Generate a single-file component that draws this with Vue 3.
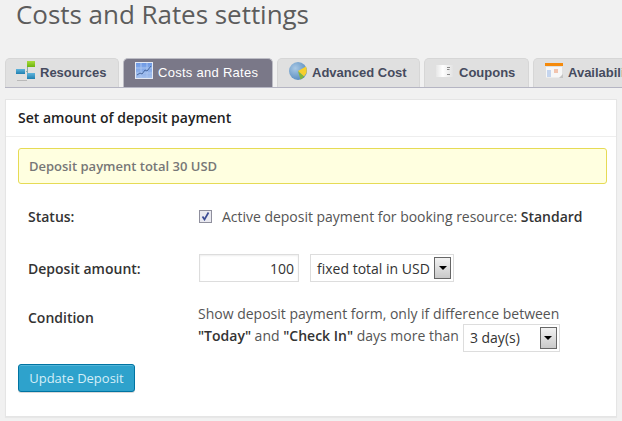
<script setup>
const tabs = [
  { name: 'Resources', icon: 'res', w: 114 },
  { name: 'Costs and Rates', icon: 'cost', w: 150, active: true },
  { name: 'Advanced Cost', icon: 'adv', w: 143 },
  { name: 'Coupons', icon: 'cou', w: 105 },
  { name: 'Availability', icon: 'ava', w: 120 },
]
</script>

<template>
  <div class="page">
    <h1 class="title">Costs and Rates settings</h1>
    <div class="tabs">
      <div v-for="t in tabs" :key="t.name" class="tab" :class="{ active: t.active }" :style="{ width: t.w + 'px' }">
        <svg class="ico" width="18" height="18" viewBox="0 0 18 18">
          <defs>
            <linearGradient id="gBlue" x1="0" y1="0" x2="0" y2="1">
              <stop offset="0" stop-color="#5fb4dc" />
              <stop offset="1" stop-color="#1f7fb0" />
            </linearGradient>
            <linearGradient id="gGreen" x1="0" y1="0" x2="0" y2="1">
              <stop offset="0" stop-color="#a8dc3c" />
              <stop offset="1" stop-color="#6cb30f" />
            </linearGradient>
            <linearGradient id="gCost" x1="0" y1="0" x2="0" y2="1">
              <stop offset="0" stop-color="#6c98e4" />
              <stop offset="1" stop-color="#a5c1ee" />
            </linearGradient>
            <radialGradient id="gAdv" cx="0.35" cy="0.35" r="0.75">
              <stop offset="0" stop-color="#a9c8e4" />
              <stop offset="1" stop-color="#5288bd" />
            </radialGradient>
            <linearGradient id="gCou" x1="0" y1="0" x2="1" y2="0">
              <stop offset="0" stop-color="#e6e6e6" />
              <stop offset="0.4" stop-color="#ffffff" />
              <stop offset="1" stop-color="#e2e2e2" />
            </linearGradient>
          </defs>
          <template v-if="t.icon === 'res'">
            <path d="M9 9.5h2M10.5 5v8" stroke="#8aa" fill="none" />
            <rect x="10" y="-1" width="8" height="6" fill="url(#gGreen)" />
            <rect x="-1" y="7" width="9" height="5" fill="url(#gBlue)" />
            <rect x="10" y="11" width="8" height="6" fill="url(#gBlue)" />
            <rect x="0" y="18" width="10" height="1" fill="#b9b9b9" />
          </template>
          <template v-else-if="t.icon === 'cost'">
            <rect x="0.5" y="0.5" width="17" height="16" fill="url(#gCost)" stroke="#e3e9f4" />
            <path d="M6 1v15M12 1v15M1 6h16M1 11h16" stroke="#a9c4f0" fill="none" />
            <path d="M2 13l3-2 2 1 3-4 2 1 4-5" stroke="#47679e" fill="none" />
          </template>
          <template v-else-if="t.icon === 'adv'">
            <circle cx="9" cy="9" r="9" fill="url(#gAdv)" />
            <path d="M9 9l8-4.5a9 9 0 0 1-2 10z" fill="#f7cf2d" />
            <path d="M9 9l6 5.5a9 9 0 0 1-3.5 3z" fill="#83b83a" />
          </template>
          <template v-else-if="t.icon === 'cou'">
            <rect x="0" y="3" width="17" height="12" fill="url(#gCou)" />
            <path d="M11 5.5h3M11 7.5h2.5M11 12.5h3" stroke="#888" fill="none" />
          </template>
          <template v-else>
            <rect x="0" y="1" width="18" height="3" fill="#f58a0b" />
            <rect x="0.5" y="4.5" width="17" height="11.5" fill="#f7f7f7" stroke="#e0e0e0" />
            <rect x="2" y="8" width="4" height="7" fill="#c5d5ee" />
            <rect x="9" y="7" width="4" height="4" fill="#f2c4ae" />
            <path d="M14 16l4-4v4z" fill="#c4c4c4" />
          </template>
        </svg>
        <span>{{ t.name }}</span>
      </div>
    </div>

    <section class="panel">
      <h2 class="panel-head">Set amount of deposit payment</h2>
      <div class="panel-body">
        <div class="notice">Deposit payment total 30 USD</div>

        <div class="row status">
          <div class="label">Status:</div>
          <label class="check-line">
            <span class="check">
              <svg width="9" height="9" viewBox="0 0 9 9"><path d="M1.5 4.5l2 3 4-7" stroke="#3a4a94" stroke-width="1.7" fill="none" /></svg>
            </span>
            <span>Active deposit payment for booking resource: <b>Standard</b></span>
          </label>
        </div>

        <div class="row amount">
          <div class="label">Deposit amount:</div>
          <input class="num" value="100" />
          <div class="select type-select">
            <span>fixed total in USD</span>
            <i class="arrow"></i>
          </div>
        </div>

        <div class="row condition">
          <div class="label">Condition</div>
          <div class="cond-text">
            <div>Show deposit payment form, only if difference between</div>
            <div class="line2">
              <span><b>"Today"</b> and <b>"Check In"</b> days more than</span>
              <div class="select days-select">
                <span>3 day(s)</span>
                <i class="arrow"></i>
              </div>
            </div>
          </div>
        </div>

        <button class="btn">Update Deposit</button>
      </div>
    </section>
  </div>
</template>

<style>
html, body { margin: 0; overflow: hidden; background: #f1f1f1; }
</style>

<style scoped>
.page {
  width: 622px;
  height: 421px;
  overflow: hidden;
  background: #f1f1f1;
  font-family: "Open Sans", sans-serif;
  color: #444;
  box-sizing: border-box;
}
.title {
  margin: 0;
  padding: 0 0 0 16px;
  height: 58px;
  font-size: 26px;
  font-weight: 400;
  line-height: 28px;
  letter-spacing: -0.04px;
  color: #5c5c5c;
  box-sizing: border-box;
}
.tabs {
  display: flex;
  gap: 4px;
  margin-left: 5px;
  height: 30px;
  border-bottom: 1px solid #b5b5c3;
  box-sizing: border-box;
  width: 700px;
}
.tab {
  flex: none;
  display: flex;
  align-items: center;
  gap: 5px;
  box-sizing: border-box;
  padding: 0 0 2px 11px;
  height: 29px;
  background: #e0e0e0;
  border: 1px solid #d6d6d6;
  border-bottom: 0;
  border-radius: 5px 5px 0 0;
  font-family: "Liberation Sans", sans-serif;
  font-size: 13px;
  font-weight: 700;
  color: #464b5e;
  white-space: nowrap;
}
.tab.active {
  background: #7a7888;
  border-color: #bdbdc5;
  color: #fff;
  font-weight: 400;
  letter-spacing: 0.28px;
}
.ico { flex: none; margin-top: -2px; overflow: visible; }
.panel {
  margin: 11px 5px 0;
  width: 612px;
  height: 318px;
  background: #fff;
  border: 1px solid #e5e5e5;
  box-shadow: 0 1px 1px rgba(0, 0, 0, 0.04);
  box-sizing: border-box;
}
.panel-head {
  margin: 0;
  height: 37px;
  padding: 0 12px;
  font-size: 14px;
  font-weight: 600;
  line-height: 35px;
  color: #222;
  border-bottom: 1px solid #eee;
  box-sizing: border-box;
}
.panel-body { padding: 11px 9px 0 12px; }
.notice {
  height: 36px;
  line-height: 34px;
  box-sizing: border-box;
  padding: 0 10px;
  background: #ffffe0;
  border: 1px solid #e6db55;
  border-radius: 3px;
  font-size: 13px;
  font-weight: 600;
  color: #777;
}
.row { display: flex; align-items: center; font-size: 14px; }
.label {
  flex: none;
  width: 181px;
  padding-left: 10px;
  box-sizing: border-box;
  font-weight: 600;
  color: #333;
}
.status { margin-top: 21px; height: 22px; }
.check-line { display: flex; align-items: center; gap: 10px; color: #555; letter-spacing: -0.02px; }
.check-line b { font-weight: 600; color: #333; }
.check {
  width: 13px;
  height: 13px;
  flex: none;
  box-sizing: border-box;
  border: 1px solid #8f8f9d;
  background: #e9e9f0;
  display: flex;
  align-items: center;
  justify-content: center;
}
.amount { margin-top: 27px; height: 28px; }
.num {
  width: 100px;
  height: 28px;
  box-sizing: border-box;
  border: 1px solid #ddd;
  padding: 0 4px 0 0;
  margin: 0;
  text-align: right;
  font: 14px "Open Sans", sans-serif;
  color: #333;
  outline: none;
  box-shadow: inset 0 1px 2px rgba(0, 0, 0, 0.07);
}
.select {
  display: flex;
  align-items: center;
  justify-content: space-between;
  height: 28px;
  box-sizing: border-box;
  border: 1px solid #ddd;
  background: #fff;
  padding: 0 2px 0 6px;
  font-size: 14px;
  color: #333;
}
.type-select { width: 144px; margin-left: 11px; }
.days-select { width: 97px; margin-left: 4px; margin-top: -1px; }
.arrow {
  flex: none;
  width: 17px;
  height: 22px;
  box-sizing: border-box;
  border: 1px solid #666;
  background: linear-gradient(#f2f2f2, #c9c9c9);
  display: flex;
  align-items: center;
  justify-content: center;
}
.arrow::after {
  content: "";
  border-left: 4px solid transparent;
  border-right: 4px solid transparent;
  border-top: 4px solid #000;
}
.condition { margin-top: 20px; align-items: flex-start; }
.condition .label { padding-top: 6px; width: 180px; }
.cond-text { line-height: 22px; color: #555; white-space: nowrap; margin-top: 1px; }
.cond-text b { font-weight: 600; color: #333; }
.line2 { display: flex; align-items: flex-start; height: 28px; }
.btn {
  display: block;
  margin-top: 11px;
  width: 117px;
  height: 28px;
  padding: 0;
  font: 13px "Open Sans", sans-serif;
  color: #d4eef8;
  background: #2ea2cc;
  border: 1px solid #0074a2;
  border-radius: 3px;
  box-shadow: inset 0 1px 0 rgba(120, 200, 230, 0.5), 0 1px 0 rgba(0, 0, 0, 0.15);
}
</style>
